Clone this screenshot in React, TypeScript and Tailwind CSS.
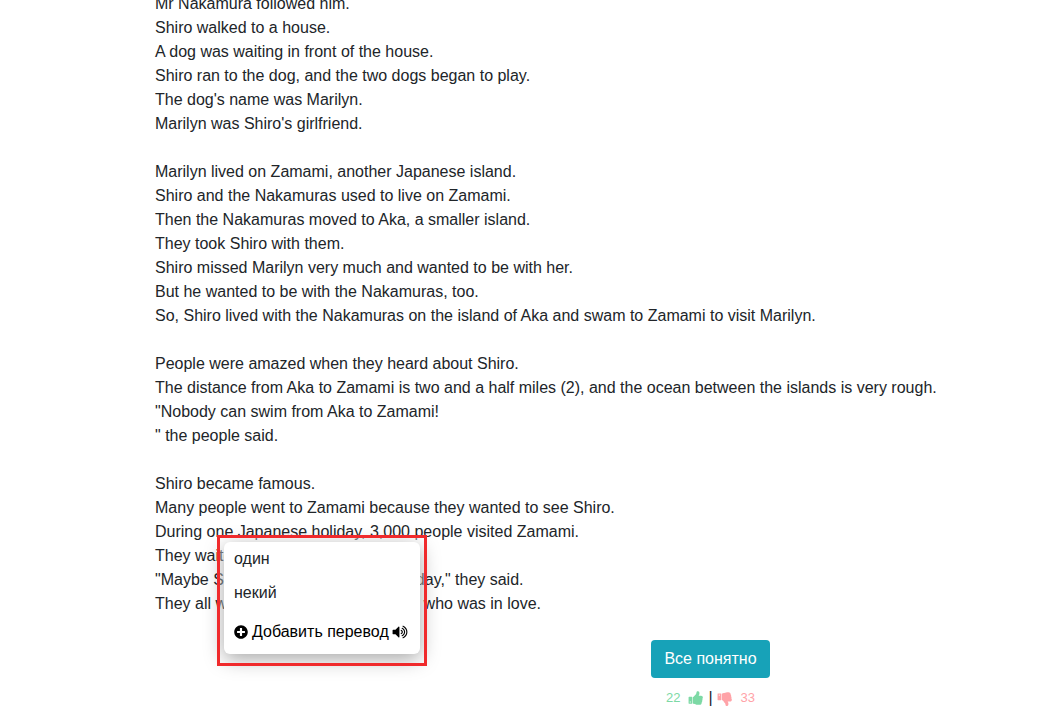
import { FaPlusCircle } from "react-icons/fa";

const volumePath =
  "M832 352v1088q0 26-19 45t-45 19-45-19l-333-333h-262q-26 0-45-19t-19-45v-384q0-26 19-45t45-19h262l333-333q19-19 45-19t45 19 19 45zm384 544q0 76-42.5 141.5t-112.5 93.5q-10 5-25 5-26 0-45-18.5t-19-45.5q0-21 12-35.5t29-25 34-23 29-36 12-56.5-12-56.5-29-36-34-23-29-25-12-35.5q0-27 19-45.5t45-18.5q15 0 25 5 70 27 112.5 93t42.5 142zm256 0q0 153-85 282.5t-225 188.5q-13 5-25 5-27 0-46-19t-19-45q0-39 39-59 56-29 76-44 74-54 115.5-135.5t41.5-173.5-41.5-173.5-115.5-135.5q-20-15-76-44-39-20-39-59 0-26 19-45t45-19q13 0 26 5 140 59 225 188.5t85 282.5zm256 0q0 230-127 422.5t-338 283.5q-13 5-26 5-26 0-45-19t-19-45q0-36 39-59 7-4 22.5-10.5t22.5-10.5q46-25 82-51 123-91 192-227t69-289-69-289-192-227q-36-26-82-51-7-4-22.5-10.5t-22.5-10.5q-39-23-39-59 0-26 19-45t45-19q13 0 26 5 211 91 338 283.5t127 422.5z";

const thumbUpPath =
  "M320 1344q0-26-19-45t-45-19q-27 0-45.5 19t-18.5 45q0 27 18.5 45.5t45.5 18.5q26 0 45-18.5t19-45.5zm160-512v640q0 26-19 45t-45 19h-288q-26 0-45-19t-19-45v-640q0-26 19-45t45-19h288q26 0 45 19t19 45zm1184 0q0 86-55 149 15 44 15 76 3 76-43 137 17 56 0 117-15 57-54 94 9 112-49 181-64 76-197 78h-129q-66 0-144-15.5t-121.5-29-120.5-39.5q-123-43-158-44-26-1-45-19.5t-19-44.5v-641q0-25 18-43.5t43-20.5q24-2 76-59t101-121q68-87 101-120 18-18 31-48t17.5-48.5 13.5-60.5q7-39 12.5-61t19.5-52 34-50q19-19 45-19 46 0 82.5 10.5t60 26 40 40.5 24 45 12 50 5 45 .5 39q0 38-9.5 76t-19 60-27.5 56q-3 6-10 18t-11 22-8 24h277q78 0 135 57t57 135z";

const thumbDownPath =
  "M320 576q0 26-19 45t-45 19q-27 0-45.5-19t-18.5-45q0-27 18.5-45.5t45.5-18.5q26 0 45 18.5t19 45.5zm160 512v-640q0-26-19-45t-45-19h-288q-26 0-45 19t-19 45v640q0 26 19 45t45 19h288q26 0 45-19t19-45zm1129-149q55 61 55 149-1 78-57.5 135t-134.5 57h-277q4 14 8 24t11 22 10 18q18 37 27 57t19 58.5 10 76.5q0 24-.5 39t-5 45-12 50-24 45-40 40.5-60 26-82.5 10.5q-26 0-45-19-20-20-34-50t-19.5-52-12.5-61q-9-42-13.5-60.5t-17.5-48.5-31-48q-33-33-101-120-49-64-101-121t-76-59q-25-2-43-20.5t-18-43.5v-641q0-26 19-44.5t45-19.5q35-1 158-44 77-26 120.5-39.5t121.5-29 144-15.5h129q133 2 197 78 58 69 49 181 39 37 54 94 17 61 0 117 46 61 43 137 0 32-15 76z";

function Icon({ path }: { path: string }) {
  return (
    <svg viewBox="0 0 1792 1792" className="size-4" fill="currentColor" aria-hidden="true">
      <path d={path} />
    </svg>
  );
}

const paragraphs: string[][] = [
  [
    "Mr Nakamura followed him.",
    "Shiro walked to a house.",
    "A dog was waiting in front of the house.",
    "Shiro ran to the dog, and the two dogs began to play.",
    "The dog's name was Marilyn.",
    "Marilyn was Shiro's girlfriend.",
  ],
  [
    "Marilyn lived on Zamami, another Japanese island.",
    "Shiro and the Nakamuras used to live on Zamami.",
    "Then the Nakamuras moved to Aka, a smaller island.",
    "They took Shiro with them.",
    "Shiro missed Marilyn very much and wanted to be with her.",
    "But he wanted to be with the Nakamuras, too.",
    "So, Shiro lived with the Nakamuras on the island of Aka and swam to Zamami to visit Marilyn.",
  ],
  [
    "People were amazed when they heard about Shiro.",
    "The distance from Aka to Zamami is two and a half miles (2), and the ocean between the islands is very rough.",
    "\"Nobody can swim from Aka to Zamami!",
    "\" the people said.",
  ],
  [
    "Shiro became famous.",
    "Many people went to Zamami because they wanted to see Shiro.",
    "During one Japanese holiday, 3,000 people visited Zamami.",
    "They waited for Shiro.",
    "\"Maybe Shiro will swim to Zamami today,\" they said.",
    "They all wanted to see Shiro, the dog who was in love.",
  ],
];

function TranslationMenu() {
  return (
    <div className="absolute -bottom-[50px] left-[62px] bg-white/40 px-[7px] pt-[7px] pb-3 after:pointer-events-none after:absolute after:inset-0 after:border-[3px] after:border-[#f02a2c] after:content-['']">
      <div className="flex w-[196px] flex-col rounded-md bg-white pb-2.5 text-[#212529] shadow-[0_5px_20px_rgba(0,0,0,0.35)]">
        <button type="button" className="h-[34px] px-2.5 text-left">один</button>
        <button type="button" className="h-[34px] px-2.5 text-left">некий</button>
        <div className="flex h-[34px] items-end justify-between pr-3 pl-2.5 text-black">
          <button type="button" className="flex items-center gap-1 whitespace-nowrap">
            <FaPlusCircle className="size-3.5" />
            Добавить перевод
          </button>
          <button type="button" aria-label="Прослушать" className="flex h-6 items-center">
            <Icon path={volumePath} />
          </button>
        </div>
      </div>
    </div>
  );
}

export default function App() {
  return (
    <main className="overflow-hidden bg-white pr-4 pl-[155px] font-['Liberation_Sans',sans-serif] text-base text-[#212529]">
      <article className="relative -mt-2 flex flex-col gap-6">
        {paragraphs.map((lines) => (
          <div key={lines[0]}>
            {lines.map((line) => (
              <p key={line}>{line}</p>
            ))}
          </div>
        ))}
        <TranslationMenu />
      </article>
      <div className="mt-6 flex flex-col items-center pl-[237px]">
        <button type="button" className="h-[38px] rounded bg-[#17a2b8] px-[13px] text-white">
          Все понятно
        </button>
        <div className="mt-2 flex h-6 items-center text-[13px]">
          <button type="button" aria-label="Нравится" className="flex items-center gap-2 text-[#7dd9a5]">
            22
            <Icon path={thumbUpPath} />
          </button>
          <span className="px-1 text-base">|</span>
          <button type="button" aria-label="Не нравится" className="flex items-center gap-2 text-[#ffa3a8]">
            <Icon path={thumbDownPath} />
            33
          </button>
        </div>
      </div>
    </main>
  );
}
